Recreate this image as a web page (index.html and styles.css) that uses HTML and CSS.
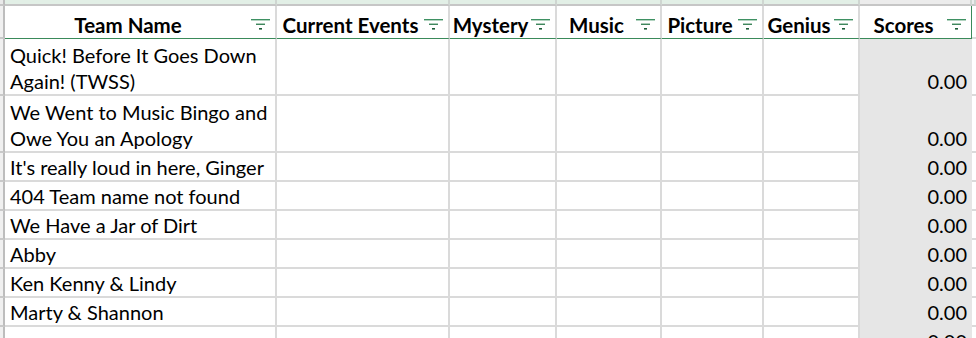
FILE: index.html
```html
<!DOCTYPE html>
<html lang="en">
<head>
<meta charset="utf-8">
<title>Team Scores</title>
<link rel="stylesheet" href="styles.css">
</head>
<body>
<div class="sheet">
  <!-- column header strip -->
  <div class="corner"></div>
  <div class="colhead sel"></div>
  <div class="colhead sel"></div>
  <div class="colhead sel"></div>
  <div class="colhead sel"></div>
  <div class="colhead sel"></div>
  <div class="colhead sel"></div>
  <div class="colhead plain"></div>
  <div class="colhead plain"></div>

  <!-- table header -->
  <div class="rowhead"></div>
  <div class="th"><span class="label">Team Name</span><svg class="filter" viewBox="0 0 19 11" width="19" height="11"><rect x="0" y="0" width="19" height="1.4" fill="#3f9163"/><rect x="5" y="4.6" width="9" height="1.3" fill="#2b7a4c"/><rect x="8" y="9" width="3" height="1.6" fill="#1d5c38"/></svg></div>
  <div class="th"><span class="label">Current Events</span><svg class="filter" viewBox="0 0 19 11" width="19" height="11"><rect x="0" y="0" width="19" height="1.4" fill="#3f9163"/><rect x="5" y="4.6" width="9" height="1.3" fill="#2b7a4c"/><rect x="8" y="9" width="3" height="1.6" fill="#1d5c38"/></svg></div>
  <div class="th"><span class="label">Mystery</span><svg class="filter" viewBox="0 0 19 11" width="19" height="11"><rect x="0" y="0" width="19" height="1.4" fill="#3f9163"/><rect x="5" y="4.6" width="9" height="1.3" fill="#2b7a4c"/><rect x="8" y="9" width="3" height="1.6" fill="#1d5c38"/></svg></div>
  <div class="th"><span class="label">Music</span><svg class="filter" viewBox="0 0 19 11" width="19" height="11"><rect x="0" y="0" width="19" height="1.4" fill="#3f9163"/><rect x="5" y="4.6" width="9" height="1.3" fill="#2b7a4c"/><rect x="8" y="9" width="3" height="1.6" fill="#1d5c38"/></svg></div>
  <div class="th"><span class="label">Picture</span><svg class="filter" viewBox="0 0 19 11" width="19" height="11"><rect x="0" y="0" width="19" height="1.4" fill="#3f9163"/><rect x="5" y="4.6" width="9" height="1.3" fill="#2b7a4c"/><rect x="8" y="9" width="3" height="1.6" fill="#1d5c38"/></svg></div>
  <div class="th"><span class="label">Genius</span><svg class="filter" viewBox="0 0 19 11" width="19" height="11"><rect x="0" y="0" width="19" height="1.4" fill="#3f9163"/><rect x="5" y="4.6" width="9" height="1.3" fill="#2b7a4c"/><rect x="8" y="9" width="3" height="1.6" fill="#1d5c38"/></svg></div>
  <div class="th th-last"><span class="label">Scores</span><svg class="filter" viewBox="0 0 19 11" width="19" height="11"><rect x="0" y="0" width="19" height="1.4" fill="#3f9163"/><rect x="5" y="4.6" width="9" height="1.3" fill="#2b7a4c"/><rect x="8" y="9" width="3" height="1.6" fill="#1d5c38"/></svg></div>
  <div class="td out"></div>

  <!-- row 1 -->
  <div class="rowhead"></div>
  <div class="td name wrap">Quick! Before It Goes Down Again! (TWSS)</div>
  <div class="td"></div><div class="td"></div><div class="td"></div><div class="td"></div><div class="td"></div>
  <div class="td num">0.00</div>
  <div class="td out"></div>

  <!-- row 2 -->
  <div class="rowhead"></div>
  <div class="td name wrap">We Went to Music Bingo and Owe You an Apology</div>
  <div class="td"></div><div class="td"></div><div class="td"></div><div class="td"></div><div class="td"></div>
  <div class="td num">0.00</div>
  <div class="td out"></div>

  <!-- row 3 -->
  <div class="rowhead"></div>
  <div class="td name">It's really loud in here, Ginger</div>
  <div class="td"></div><div class="td"></div><div class="td"></div><div class="td"></div><div class="td"></div>
  <div class="td num">0.00</div>
  <div class="td out"></div>

  <!-- row 4 -->
  <div class="rowhead"></div>
  <div class="td name">404 Team name not found</div>
  <div class="td"></div><div class="td"></div><div class="td"></div><div class="td"></div><div class="td"></div>
  <div class="td num">0.00</div>
  <div class="td out"></div>

  <!-- row 5 -->
  <div class="rowhead"></div>
  <div class="td name">We Have a Jar of Dirt</div>
  <div class="td"></div><div class="td"></div><div class="td"></div><div class="td"></div><div class="td"></div>
  <div class="td num">0.00</div>
  <div class="td out"></div>

  <!-- row 6 -->
  <div class="rowhead"></div>
  <div class="td name">Abby</div>
  <div class="td"></div><div class="td"></div><div class="td"></div><div class="td"></div><div class="td"></div>
  <div class="td num">0.00</div>
  <div class="td out"></div>

  <!-- row 7 -->
  <div class="rowhead"></div>
  <div class="td name">Ken Kenny &amp; Lindy</div>
  <div class="td"></div><div class="td"></div><div class="td"></div><div class="td"></div><div class="td"></div>
  <div class="td num">0.00</div>
  <div class="td out"></div>

  <!-- row 8 -->
  <div class="rowhead"></div>
  <div class="td name">Marty &amp; Shannon</div>
  <div class="td"></div><div class="td"></div><div class="td"></div><div class="td"></div><div class="td"></div>
  <div class="td num">0.00</div>
  <div class="td out"></div>

  <!-- row 9 -->
  <div class="rowhead"></div>
  <div class="td name"></div>
  <div class="td"></div><div class="td"></div><div class="td"></div><div class="td"></div><div class="td"></div>
  <div class="td num">0.00</div>
  <div class="td out"></div>
</div>
</body>
</html>
```

FILE: styles.css
```css
html, body {
  margin: 0;
  padding: 0;
  background: #ffffff;
  overflow: hidden;
}

.sheet {
  display: grid;
  grid-template-columns: 5px 272px 173px 107px 105px 102px 96px 112px 1fr;
  grid-template-rows: 6px 33px 57px 57px repeat(8, 29px);
  width: 976px;
  height: 338px;
  overflow: hidden;
  font-family: "Lato", "Liberation Sans", sans-serif;
  font-size: 20px;
  color: #000000;
}

.sheet > div {
  box-sizing: border-box;
  min-width: 0;
}

/* Excel chrome */
.corner {
  background: #e9e9e9;
  border-right: 2px solid #bdbdbd;
  border-bottom: 2px solid #c6c6c6;
}

.colhead {
  border-right: 2px solid #cfd6d1;
  border-bottom: 2px solid #c6c6c6;
}

.colhead.sel {
  background: #e2efe6;
}

.colhead.plain {
  background: #ececec;
}

.rowhead {
  background: #f0f0f0;
  border-right: 2px solid #bdbdbd;
  border-bottom: 2px solid #c9c9c9;
}

/* table header */
.th {
  display: flex;
  align-items: flex-end;
  background: #ffffff;
  border-right: 2px solid #dadada;
  border-bottom: 1px solid #3a8a5a;
  font-weight: 700;
  font-size: 20.5px;
  color: #000000;
  line-height: 26px;
  white-space: nowrap;
}

.th .label {
  flex: 1;
  text-align: center;
}

.th .filter {
  flex: none;
  margin: 0 5px 8px 0;
}

.th-last {
  border-right: 1px solid #3a8a5a;
}

/* body cells */
.td {
  display: flex;
  flex-direction: column;
  justify-content: flex-end;
  border-right: 2px solid #dadada;
  border-bottom: 2px solid #dadada;
  line-height: 26px;
  padding-left: 5px;
}

.td.name {
  white-space: nowrap;
}

.td.name.wrap {
  white-space: normal;
}

.td.num {
  background: #e6e6e6;
  border-right-color: #e6e6e6;
  border-bottom-color: #e6e6e6;
  text-align: right;
  padding-right: 3px;
}

.td.out {
  padding-left: 0;
  border-right: none;
}
```
